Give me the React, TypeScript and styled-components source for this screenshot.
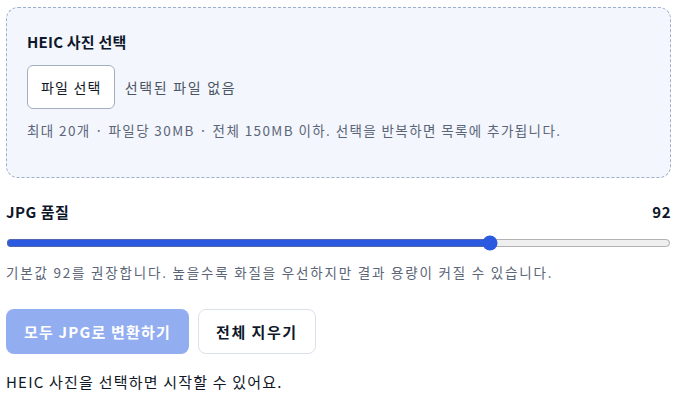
import React, { useState } from "react";
import styled, { createGlobalStyle } from "styled-components";

const GlobalStyle = createGlobalStyle`
  body {
    margin: 0;
    background: #ffffff;
    font-family: "Noto Sans CJK KR", "Noto Sans", sans-serif;
    color: #0f172a;
  }
`;

const Page = styled.main`
  display: flex;
  flex-direction: column;
  padding: 7px 6px;
`;

const DropZone = styled.section`
  display: flex;
  flex-direction: column;
  padding: 22px 20px 37px;
  border: 1px dashed #9fb0ca;
  border-radius: 12px;
  background: #f3f6fd;
`;

const Title = styled.h2`
  margin: 0 0 11px;
  font-size: 15px;
  font-weight: 700;
  line-height: 24px;
  letter-spacing: 0.2px;
  color: #0f172a;
`;

const FileRow = styled.div`
  display: flex;
  align-items: center;
  gap: 10px;
`;

const FileButton = styled.label`
  display: inline-flex;
  align-items: center;
  justify-content: center;
  height: 44px;
  padding: 0 12px 0 13px;
  box-sizing: border-box;
  border: 1px solid #a3aebf;
  border-radius: 6px;
  background: #ffffff;
  font-size: 14px;
  letter-spacing: 1.2px;
  color: #111827;
`;

const FileName = styled.span`
  font-size: 14px;
  letter-spacing: 1.7px;
  color: #4b5563;
`;

const Hint = styled.p<{ $gap: number; $spacing: number }>`
  margin: ${(p) => p.$gap}px 0 0;
  font-size: 13.5px;
  line-height: 20px;
  letter-spacing: ${(p) => p.$spacing}px;
  color: #5b6577;
`;

const QualityHeader = styled.div`
  display: flex;
  justify-content: space-between;
  align-items: center;
  margin-top: 23px;
  font-size: 15px;
  font-weight: 700;
  line-height: 22px;
  letter-spacing: 0.5px;
  color: #0f172a;
`;

const Slider = styled.input`
  width: 100%;
  margin: 12px 0 0;
  accent-color: #2b59e0;
`;

const Actions = styled.div`
  display: flex;
  gap: 9px;
  margin-top: 27px;
`;

const Button = styled.button<{ $primary?: boolean }>`
  height: 45px;
  padding: 0 17px;
  border-radius: 8px;
  font-family: inherit;
  font-size: 15px;
  font-weight: 700;
  letter-spacing: ${(p) => (p.$primary ? 1.2 : 1.5)}px;
  border: 1px solid ${(p) => (p.$primary ? "transparent" : "#dbe1ea")};
  background: ${(p) => (p.$primary ? "#93aef0" : "#ffffff")};
  color: ${(p) => (p.$primary ? "#ffffff" : "#0f172a")};
`;

const Status = styled.p`
  margin: 17px 0 0;
  font-size: 15px;
  line-height: 22px;
  letter-spacing: 1.2px;
  color: #111827;
`;

export default function App() {
  const [quality, setQuality] = useState(92);

  return (
    <>
      <GlobalStyle />
      <Page>
        <DropZone>
          <Title>HEIC 사진 선택</Title>
          <FileRow>
            <FileButton>파일 선택</FileButton>
            <FileName>선택된 파일 없음</FileName>
          </FileRow>
          <Hint $gap={11} $spacing={1.4}>
            최대 20개 · 파일당 30MB · 전체 150MB 이하. 선택을 반복하면 목록에 추가됩니다.
          </Hint>
        </DropZone>

        <QualityHeader>
          <span>JPG 품질</span>
          <span>{quality}</span>
        </QualityHeader>
        <Slider
          type="range"
          min={70}
          max={100}
          value={quality}
          onChange={(e) => setQuality(Number(e.target.value))}
        />
        <Hint $gap={11} $spacing={1.8}>
          기본값 92를 권장합니다. 높을수록 화질을 우선하지만 결과 용량이 커질 수 있습니다.
        </Hint>

        <Actions>
          <Button $primary disabled>
            모두 JPG로 변환하기
          </Button>
          <Button>전체 지우기</Button>
        </Actions>
        <Status>HEIC 사진을 선택하면 시작할 수 있어요.</Status>
      </Page>
    </>
  );
}
